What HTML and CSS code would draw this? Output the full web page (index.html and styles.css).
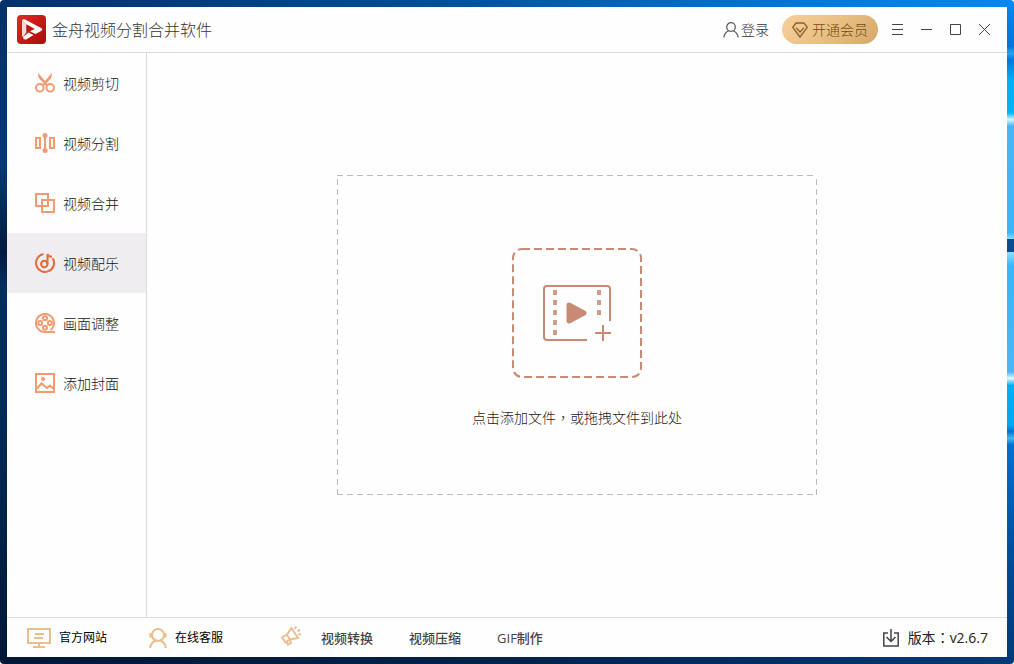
FILE: index.html
```html
<!DOCTYPE html>
<html lang="zh-CN">
<head>
<meta charset="utf-8">
<title>金舟视频分割合并软件</title>
<link rel="stylesheet" href="styles.css">
</head>
<body>
<div class="desktop">
<div class="window">
  <header class="titlebar">
    <svg class="logo" width="29" height="29" viewBox="0 0 29 29">
      <defs>
        <linearGradient id="red" x1="0" y1="0" x2="1" y2="1"><stop offset="0" stop-color="#e02a22"/><stop offset=".5" stop-color="#c81a17"/><stop offset="1" stop-color="#a50d0d"/></linearGradient>
      </defs>
      <rect width="29" height="29" rx="4" fill="url(#red)"/>
      <path d="M5 5.500L9.500 9.500V17L6 22Q5 22 5 20Z" fill="#f6dcd9"/>
      <path d="M5 5.500Q6 3.500 8 4.500L24.500 13.200Q26 14.500 24.500 15.800L18.500 19L13 16.200L17.500 14L9.500 9.500Z" fill="#fff"/>
      <path d="M9.500 9.500V16.500L17.500 14Z" fill="#bd1815"/>
      <path d="M6 22L11.500 17.500L16.500 20L9.500 24.300Q6.500 25.500 6 22Z" fill="#fff"/>
    </svg>
    <h1 class="title">金舟视频分割合并软件</h1>
    <button class="login" type="button">
      <svg width="16" height="16" viewBox="0 0 16 16" fill="none" stroke="#555" stroke-width="1.2"><circle cx="8" cy="5" r="4.300"/><path d="M.8 15.500C1.300 11.500 3.500 9.600 5.700 8.700M15.200 15.500C14.700 11.500 12.500 9.600 10.300 8.700"/></svg>
      <span>登录</span>
    </button>
    <button class="vip" type="button">
      <svg width="16" height="16" viewBox="0 0 16 16" fill="none" stroke="#8a5f27" stroke-width="1.300" stroke-linejoin="round"><path d="M4 1H12L15.300 5.300L8 15L.7 5.300Z"/><path d="M4 5.600L8 10L12 5.600"/></svg>
      <span>开通会员</span>
    </button>
    <button class="control" type="button" aria-label="菜单"><svg width="11" height="11" viewBox="0 0 11 11"><path d="M0 .5H11M0 5.500H11M0 10.500H11"/></svg></button>
    <button class="control" type="button" aria-label="最小化"><svg width="11" height="11" viewBox="0 0 11 11"><path d="M0 5.500H11"/></svg></button>
    <button class="control" type="button" aria-label="最大化"><svg width="11" height="11" viewBox="0 0 11 11"><path d="M.5 .5H10.500V10.500H.5Z"/></svg></button>
    <button class="control" type="button" aria-label="关闭"><svg width="11" height="11" viewBox="0 0 11 11"><path d="M0 0L11 11M11 0L0 11"/></svg></button>
  </header>

  <div class="body">
    <nav class="sidebar">
      <button class="item" type="button">
        <svg width="20" height="20" viewBox="0 0 20 20"><g fill="none" stroke="#f29a70" stroke-width="2"><circle cx="4.800" cy="14.800" r="3.800"/><circle cx="15.200" cy="14.800" r="3.800"/></g><path d="M3.200 0Q2.500 4 5.500 7L8.500 10L7 12L9 13L10 11.500L11 13L13 12L11.500 10L14.500 7Q17.500 4 16.800 0L10 8Z" fill="#f29a70"/></svg>
        <span>视频剪切</span>
      </button>
      <button class="item" type="button">
        <svg width="20" height="20" viewBox="0 0 20 20" fill="none" stroke="#f29a70" stroke-width="2"><path d="M1 5H5V15H1ZM15 5H19V15H15ZM10 2V18"/><g fill="#f29a70" stroke="none"><circle cx="10" cy="2.500" r="2.500"/><circle cx="10" cy="17.500" r="2.500"/></g></svg>
        <span>视频分割</span>
      </button>
      <button class="item" type="button">
        <svg width="20" height="20" viewBox="0 0 20 20" fill="none" stroke="#f29a70" stroke-width="2"><path d="M1 1H13V13H1ZM7 7H19V19H7Z"/></svg>
        <span>视频合并</span>
      </button>
      <button class="item active" type="button" aria-current="page">
        <svg width="20" height="20" viewBox="0 0 20 20" fill="none" stroke="#e8693a" stroke-width="2"><path d="M8.500 1.100A9 9 0 1 0 17.700 5.300"/><circle cx="9.300" cy="11" r="3.200"/><path d="M12.500 11V1Q13 4 17 3.500"/></svg>
        <span>视频配乐</span>
      </button>
      <button class="item" type="button">
        <svg width="20" height="20" viewBox="0 0 20 20" fill="none" stroke="#f29a70" stroke-width="2"><path d="M20 19H10A9 9 0 1 1 15.500 17.100"/><circle cx="10" cy="5.200" r="2"/><circle cx="5.200" cy="10" r="2"/><circle cx="14.800" cy="10" r="2"/><circle cx="10" cy="14.800" r="2"/></svg>
        <span>画面调整</span>
      </button>
      <button class="item" type="button">
        <svg width="20" height="20" viewBox="0 0 20 20" fill="none" stroke="#f29a70" stroke-width="2"><path d="M1 1H19V19H1Z"/><path d="M2 15.500L6.500 10.500L12 15L15 12.500L18 15.500"/><circle cx="8" cy="6" r="2" fill="#f29a70" stroke="none"/></svg>
        <span>添加封面</span>
      </button>
    </nav>

    <main class="content">
      <button class="dropzone" type="button">
        <svg width="130" height="130" viewBox="0 0 130 130" fill="none" stroke="#c98a74" stroke-width="2">
          <rect x="1" y="1" width="128" height="128" rx="9" stroke-dasharray="8 4"/>
          <path d="M75 92H35Q32 92 32 89V41Q32 38 35 38H95Q98 38 98 41V73M91 77V93M83 85H99"/>
          <path d="M43 42V90" stroke="#d09b88" stroke-width="4" stroke-dasharray="5 5"/>
          <path d="M87 42V67" stroke="#d09b88" stroke-width="4" stroke-dasharray="5 5"/>
          <path d="M57 57L72 65L57 73Z" fill="#c98a74" stroke-width="5" stroke-linejoin="round"/>
        </svg>
        <span>点击添加文件<span class="mark" lang="zh-TW">，</span>或拖拽文件到此处</span>
      </button>
    </main>
  </div>

  <footer class="footer">
    <a class="link" href="#">
      <svg width="24" height="20" viewBox="0 0 24 20" fill="none" stroke="#eabf8c" stroke-width="2"><path d="M1 1H23V15H1ZM12 15V19M6 19H18M8 6H17M7 10H16"/></svg>
      <span>官方网站</span>
    </a>
    <a class="link service" href="#">
      <svg width="18" height="20" viewBox="0 0 18 20" fill="none" stroke="#eabf8c" stroke-width="2"><circle cx="9" cy="7" r="6"/><path d="M1 20C1.500 16 3.500 14 6.500 12.500M17 20C16.500 16 14.500 14 11.500 12.500"/><path d="M2 5V9.500M16 5V9.500" stroke-width="3"/></svg>
      <span>在线客服</span>
    </a>
    <svg class="horn" width="20" height="20" viewBox="0 0 20 20" fill="none" stroke="#eabf8c" stroke-width="2"><path d="M10.500 2L17 12L9 13.500L4.500 16.500L1 11.500L6 8.500Z"/><path d="M5.500 8.500L9.500 14M5.500 16L7 18.500L10 16.500L9 14M14 3L15 .5M16.500 5.500L19 3.500M17.500 8.500L20 8"/></svg>
    <a class="promo" href="#">视频转换</a>
    <a class="promo" href="#">视频压缩</a>
    <a class="promo" href="#">GIF制作</a>
    <button class="version" type="button">
      <svg width="16" height="18" viewBox="0 0 16 18" fill="none" stroke="#444" stroke-width="1.500"><path d="M5 4H.8V17H15.200V4H11M8 0V12M3.500 8L8 12.500L12.500 8"/></svg>
      <span>版本<span class="mark" lang="zh-TW">：</span>v2.6.7</span>
    </button>
  </footer>
</div>
</div>
</body>
</html>
```
FILE: styles.css
```css
* {
  box-sizing: border-box;
}

body {
  margin: 0;
  background: #fff;
  color: #222;
  font-family: "Open Sans", "Noto Sans CJK SC", sans-serif;
  font-size: 14px;
  font-weight: 300;
  line-height: 20px;
}

button {
  margin: 0;
  padding: 0;
  border: 0;
  background: none;
  color: inherit;
  font: inherit;
  cursor: pointer;
}

a {
  color: inherit;
  text-decoration: none;
}

svg {
  flex: none;
}

.desktop {
  display: flex;
  min-height: 100vh;
  padding: 7px;
  border-radius: 4px;
  background:
    linear-gradient(90deg, #003069, #014b92 40%, #0078dc 80%, #0588f0) top / 100% 7px no-repeat,
    linear-gradient(90deg, #001735, #00224b 50%, #003a76) bottom / 100% 7px no-repeat,
    linear-gradient(#0588f0 0, #0075dc 7%, #27a5ef 8%, #0078dd 9%, #00aef5 12%, #00b4f5 17%, #d5f4ff 18%, #4ab5f5 19%, #3bb5f8 35%, #8ae0ff 36%, #0b4b90 36%, #0b4b90 38%, #8ae0ff 38%, #38b6f8 40%, #4cb5f4 56%, #e0f7ff 57%, #00b0f5 58%, #00a7f0 64%, #0071d6 65%, #45b8f0 66%, #0070d4 67%, #004a94 85%, #003a76) right / 7px 100% no-repeat,
    linear-gradient(#003069, #003a74 25%, #001b40 38%, #002d60 43%, #002b5a 60%, #001735) left / 7px 100% no-repeat;
}

.window {
  display: flex;
  flex: 1;
  flex-direction: column;
  background: #fefefe;
}

.titlebar {
  display: flex;
  align-items: center;
  height: 46px;
  padding: 0 8px 0 10px;
  border-bottom: 1px solid #dcdcdc;
}

.title {
  flex: 1;
  margin: 0 0 0 6px;
  color: #333;
  font-size: 16px;
  font-weight: 300;
}

.login {
  display: flex;
  align-items: center;
  gap: 2px;
  margin-right: 13px;
  color: #333;
}

.vip {
  display: flex;
  align-items: center;
  justify-content: center;
  gap: 4px;
  width: 96px;
  height: 29px;
  margin-right: 5px;
  border-radius: 15px;
  background: linear-gradient(135deg, #f8cf9c, #eac085 50%, #d5a868);
  color: #75490f;
}

.control {
  display: flex;
  align-items: center;
  justify-content: center;
  width: 29px;
  height: 29px;
}

.control svg {
  fill: none;
  stroke: #444;
}

.body {
  display: flex;
  flex: 1;
}

.sidebar {
  width: 140px;
  border-right: 1px solid #dcdcdc;
}

.item {
  display: flex;
  align-items: center;
  gap: 8px;
  width: 100%;
  height: 60px;
  padding-left: 28px;
  color: #111;
}

.item span {
  padding-top: 2px;
}

.active {
  background: #efedf0;
}

.content {
  display: flex;
  flex: 1;
  align-items: center;
  justify-content: center;
}

.dropzone {
  display: flex;
  flex-direction: column;
  align-items: center;
  gap: 29px;
  width: 480px;
  height: 320px;
  padding-top: 73px;
  background:
    repeating-linear-gradient(90deg, #bbb 0 6px, transparent 6px 10px) top / 100% 1px no-repeat,
    repeating-linear-gradient(90deg, #bbb 0 6px, transparent 6px 10px) bottom / 100% 1px no-repeat,
    repeating-linear-gradient(transparent 0 4px, #bbb 4px 10px) left / 1px 100% no-repeat,
    repeating-linear-gradient(transparent 0 4px, #bbb 4px 10px) right / 1px 100% no-repeat;
}

.mark {
  font-family: "Noto Sans CJK TC", sans-serif;
}

.footer {
  display: flex;
  align-items: center;
  height: 40px;
  padding: 0 19px 0 20px;
  border-top: 1px solid #dcdcdc;
}

.link {
  display: flex;
  align-items: center;
  gap: 8px;
  color: #000;
  font-size: 12px;
  font-weight: 400;
}

.service {
  margin-left: 42px;
}

.horn {
  margin: 0 20px 4px 58px;
}

.promo {
  margin-right: 36px;
  color: #444;
  font-size: 13px;
  font-weight: 500;
}

.version {
  display: flex;
  align-items: center;
  gap: 9px;
  margin-left: auto;
  font-weight: 400;
}
```
